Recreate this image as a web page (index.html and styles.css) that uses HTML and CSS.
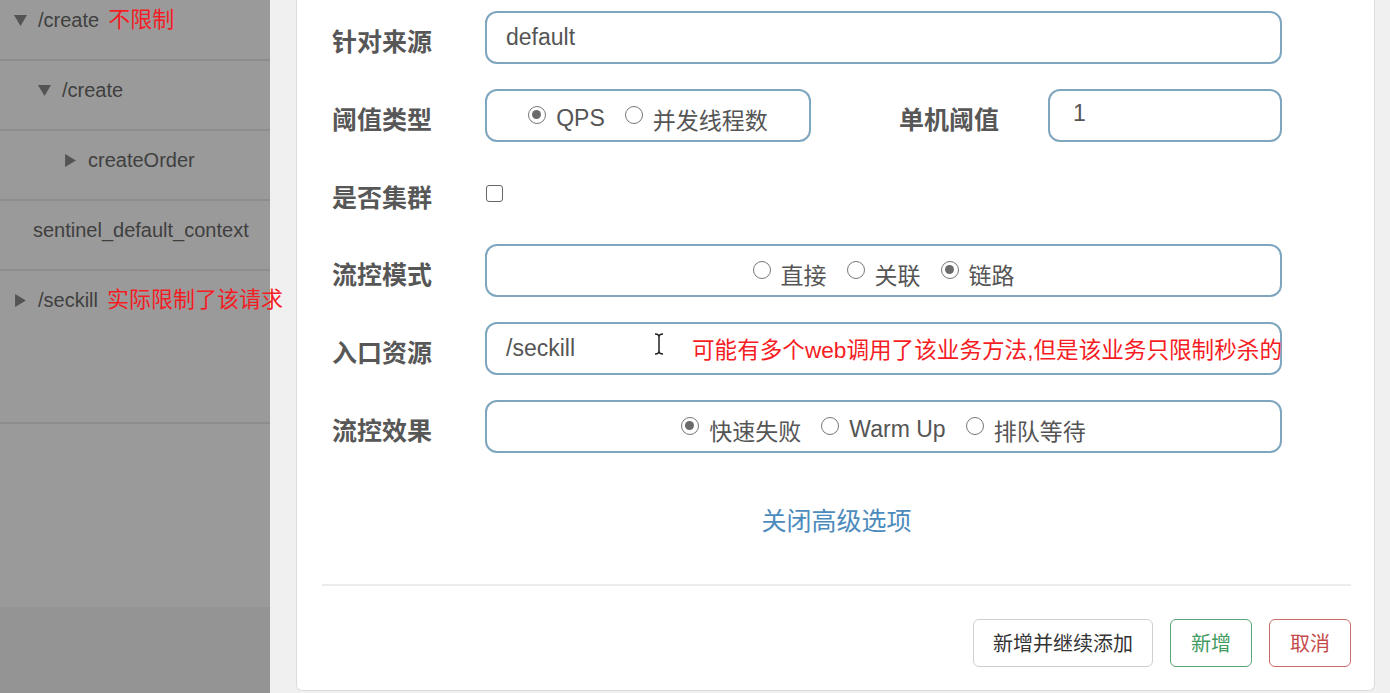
FILE: index.html
```html
<!DOCTYPE html>
<html lang="zh-CN">
  <head>
    <meta charset="utf-8">
    <title>新增流控规则</title>
    <link rel="stylesheet" href="styles.css">
  </head>

  <body>
    <div class="page">
      <aside class="tree">
        <div class="node lvl0">
          <svg class="arrow" viewBox="0 0 12 12"><polygon points="0,1 12,1 6,11" /></svg>
          <span>/create</span><span class="note">不限制</span>
        </div>
        <div class="node lvl1">
          <svg class="arrow" viewBox="0 0 12 12"><polygon points="0,1 12,1 6,11" /></svg>
          <span>/create</span>
        </div>
        <div class="node lvl2">
          <svg class="arrow" viewBox="0 0 12 12"><polygon points="1,0 11,6 1,12" /></svg>
          <span>createOrder</span>
        </div>
        <div class="node plain">
          <span>sentinel_default_context</span>
        </div>
        <div class="node lvl0 tall">
          <svg class="arrow" viewBox="0 0 12 12"><polygon points="1,0 11,6 1,12" /></svg>
          <span>/seckill</span><span class="note">实际限制了该请求</span>
        </div>
      </aside>

      <main class="backdrop">
        <div class="modal">
          <div class="form">
            <div class="row">
              <label>针对来源</label>
              <div class="field">
                <div class="box text">default</div>
              </div>
            </div>

            <div class="row">
              <label>阈值类型</label>
              <div class="field">
                <div class="box radios short">
                  <span class="radio on"></span><span class="opt">QPS</span>
                  <span class="radio"></span><span class="opt">并发线程数</span>
                </div>
                <label class="inline">单机阈值</label>
                <div class="box text count">1</div>
              </div>
            </div>

            <div class="row">
              <label>是否集群</label>
              <div class="field">
                <span class="check"></span>
              </div>
            </div>

            <div class="row">
              <label>流控模式</label>
              <div class="field">
                <div class="box radios">
                  <span class="radio"></span><span class="opt">直接</span>
                  <span class="radio"></span><span class="opt">关联</span>
                  <span class="radio on"></span><span class="opt">链路</span>
                </div>
              </div>
            </div>

            <div class="row">
              <label>入口资源</label>
              <div class="field">
                <div class="box text entry">
                  /seckill
                  <svg class="ibeam" viewBox="0 0 12 22">
                    <path d="M2 1 Q6 1 6 4 V18 Q6 21 2 21 M10 1 Q6 1 6 4 M10 21 Q6 21 6 18" />
                  </svg>
                  <span class="hint">可能有多个web调用了该业务方法,但是该业务只限制秒杀的</span>
                </div>
              </div>
            </div>

            <div class="row">
              <label>流控效果</label>
              <div class="field">
                <div class="box radios">
                  <span class="radio on"></span><span class="opt">快速失败</span>
                  <span class="radio"></span><span class="opt">Warm Up</span>
                  <span class="radio"></span><span class="opt">排队等待</span>
                </div>
              </div>
            </div>
          </div>

          <div class="toggle"><a>关闭高级选项</a></div>

          <div class="footer">
            <button class="btn">新增并继续添加</button>
            <button class="btn ok">新增</button>
            <button class="btn cancel">取消</button>
          </div>
        </div>
      </main>
    </div>
  </body>
</html>
```

FILE: styles.css
```css
body {
  margin: 0;
  font-family: "Liberation Sans", "Noto Sans CJK SC", sans-serif;
  overflow: hidden;
}

.page {
  display: flex;
  height: 693px;
}

/* left resource tree, dimmed by the modal overlay */
.tree {
  width: 270px;
  flex-shrink: 0;
  position: relative;
  z-index: 1;
  background: linear-gradient(#9a9a9a 607px, #949494 607px);
  color: #3f3f3f;
  font-size: 20px;
}

.node {
  display: flex;
  align-items: flex-start;
  height: 70px;
  box-sizing: border-box;
  padding-top: 17px;
  line-height: 24px;
  border-bottom: 2px solid #8d8d8d;
  white-space: nowrap;
}
.node > * {
  flex-shrink: 0;
}
.node:first-child {
  margin-top: -9px;
}
.node.tall {
  height: 153px;
}

.arrow {
  width: 13px;
  height: 13px;
  margin: 6px 11px 0 0;
  fill: #545454;
}

.lvl0 { padding-left: 14px; }
.lvl1 { padding-left: 38px; }
.lvl2 { padding-left: 64px; }
.plain { padding-left: 33px; }

.note {
  color: #f51c24;
  font-size: 22px;
  margin-left: 9px;
}

/* area behind the modal */
.backdrop {
  flex: 1;
  background: #f0f0f0;
  padding: 0 15px 0 26px;
  display: flex;
}

.modal {
  flex: 1;
  background: white;
  border: 1px solid #dcdcdc;
  border-top: none;
  border-radius: 0 0 6px 6px;
  margin-bottom: 2px;
  padding: 11px 23px 0 25px;
  display: flex;
  flex-direction: column;
}

.form {
  display: flex;
  flex-direction: column;
  gap: 24.8px;
  padding: 0 69px 0 10px;
}

.row {
  display: flex;
  align-items: center;
  height: 53px;
}

.row > label {
  width: 153px;
  flex-shrink: 0;
  font-size: 25px;
  font-weight: bold;
  color: #575757;
  padding-top: 5px;
}

.field {
  flex: 1;
  display: flex;
  align-items: center;
  height: 100%;
}

.box {
  height: 53px;
  box-sizing: border-box;
  border: 2px solid #7fa6bf;
  border-radius: 12px;
  display: flex;
  align-items: center;
  color: #555;
  font-size: 23px;
}

.text {
  flex: 1;
  padding-left: 19px;
}

.radios {
  flex: 1;
  justify-content: center;
  padding-top: 7px;
}
.radios.short {
  flex: none;
  width: 326px;
}

.radio {
  flex-shrink: 0;
  width: 18px;
  height: 18px;
  box-sizing: border-box;
  border: 1.5px solid #777;
  border-radius: 50%;
  background: white;
  margin-right: 10px;
  position: relative;
  top: -4px;
}
.radio.on::after {
  content: "";
  position: absolute;
  left: 3px;
  top: 3px;
  width: 9px;
  height: 9px;
  border-radius: 50%;
  background: #6b6b6b;
}

.opt {
  margin-right: 20px;
}
.opt:last-child {
  margin-right: 0;
}

.inline {
  flex: 1;
  text-align: right;
  padding-right: 49px;
  font-size: 25px;
  font-weight: bold;
  color: #575757;
  padding-top: 5px;
}

.count {
  flex: none;
  width: 234px;
  padding-left: 23px;
  padding-bottom: 3px;
}

.check {
  width: 17px;
  height: 17px;
  box-sizing: border-box;
  border: 1.5px solid #666;
  border-radius: 3px;
  margin-left: 1px;
}

.entry {
  position: relative;
}

.ibeam {
  position: absolute;
  left: 166px;
  top: 9px;
  width: 12px;
  height: 22px;
  fill: none;
  stroke: #222;
  stroke-width: 1.5;
}

.hint {
  position: absolute;
  left: 205px;
  top: 8px;
  color: #f51c24;
  font-size: 22.6px;
  white-space: nowrap;
}

.toggle {
  text-align: center;
  margin-top: 53px;
  line-height: 30px;
  font-size: 25px;
  color: #4d8bbd;
}

.footer {
  margin-top: 48px;
  border-top: 2px solid #ececec;
  padding: 33px 0 25px;
  display: flex;
  justify-content: flex-end;
  gap: 17px;
}

.btn {
  height: 48px;
  padding: 0 19px;
  font-family: inherit;
  font-size: 20px;
  color: #333;
  background: white;
  border: 1.5px solid #cfcfcf;
  border-radius: 6px;
}
.btn.ok {
  width: 82px;
  color: #3f9a5d;
  border-color: #5aa675;
}
.btn.cancel {
  width: 82px;
  color: #c54a4a;
  border-color: #cc6a6a;
}
```
